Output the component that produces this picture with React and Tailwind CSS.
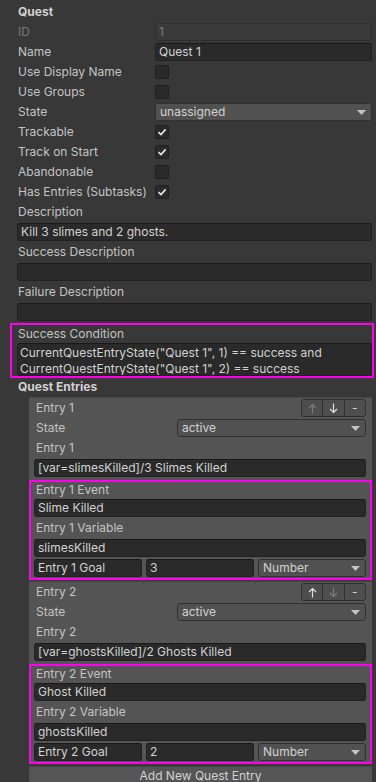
import React from "react";

const font = { fontFamily: "Inter, 'Noto Sans', sans-serif" };

function Check({ on }) {
  return (
    <div className="w-[14px] h-[14px] rounded-[2px] bg-[#2a2a2a] border border-[#1f1f1f] flex items-center justify-center">
      {on && (
        <svg width="10" height="10" viewBox="0 0 10 10">
          <polyline points="1.5,5.2 4,7.6 8.6,2.4" fill="none" stroke="#e6e6e6" strokeWidth="1.6" />
        </svg>
      )}
    </div>
  );
}

function Arrow() {
  return (
    <svg width="9" height="5" viewBox="0 0 9 5" className="shrink-0">
      <polygon points="0,0 9,0 4.5,5" fill="#c4c4c4" />
    </svg>
  );
}

function Field({ children, className = "" }) {
  return (
    <div className={"h-[18px] flex items-center rounded-[3px] bg-[#2a2a2a] border border-[#212121] border-t-[#191919] pl-[3px] text-[#d2d2d2] whitespace-nowrap overflow-hidden " + className}>
      {children}
    </div>
  );
}

function Dropdown({ children, className = "" }) {
  return (
    <div className={"h-[18px] flex items-center justify-between rounded-[3px] bg-[#515151] border border-[#303030] pl-[4px] pr-[5px] text-[#d2d2d2] " + className}>
      <span>{children}</span>
      <Arrow />
    </div>
  );
}

function Row({ label, children, dim }) {
  return (
    <div className="flex h-[20px] items-center pl-[18px] pr-[4px]">
      <div className={"w-[137px] shrink-0 " + (dim ? "text-[#7a7a7a]" : "")}>{label}</div>
      {children}
    </div>
  );
}

function Label({ children }) {
  return <div className="flex h-[20px] items-center pl-[18px]">{children}</div>;
}

function Wide({ children }) {
  return (
    <div className="flex h-[20px] items-center pl-[17px] pr-[4px]">
      <Field className="flex-1">{children}</Field>
    </div>
  );
}

function MoveButtons({ upOff, downOff }) {
  return (
    <div className="flex h-[18px] w-[65px] rounded-[3px] border border-[#303030] bg-[#4e4e4e] overflow-hidden">
      <div className={"flex-1 flex items-center justify-center border-r border-[#303030] " + (upOff ? "text-[#7c7c7c]" : "text-[#e0e0e0]")}>
        <svg width="9" height="11" viewBox="0 0 9 11">
          <path d="M4.5 10.5V1.5M1 5l3.5-3.5L8 5" fill="none" stroke="currentColor" strokeWidth="1.2" />
        </svg>
      </div>
      <div className={"flex-1 flex items-center justify-center border-r border-[#303030] " + (downOff ? "text-[#7c7c7c]" : "text-[#e0e0e0]")}>
        <svg width="9" height="11" viewBox="0 0 9 11">
          <path d="M4.5 0.5v9M1 6l3.5 3.5L8 6" fill="none" stroke="currentColor" strokeWidth="1.2" />
        </svg>
      </div>
      <div className="flex-1 flex items-center justify-center text-[#d2d2d2]">-</div>
    </div>
  );
}

function Entry({ n, text, event, variable, goal, upOff, downOff }) {
  return (
    <div className="bg-[#545454] border-t border-[#464646]">
      <div className="flex h-[20px] items-center pl-[7px] pr-[6px]">
        <span>Entry {n}</span>
        <div className="ml-auto">
          <MoveButtons upOff={upOff} downOff={downOff} />
        </div>
      </div>
      <div className="flex h-[20px] items-center pl-[7px] pr-[6px]">
        <div className="w-[141px] shrink-0">State</div>
        <Dropdown className="flex-1">active</Dropdown>
      </div>
      <div className="flex h-[20px] items-center pl-[7px]">Entry {n}</div>
      <div className="flex h-[20px] items-center pl-[5px] pr-[6px]">
        <Field className="flex-1">{text}</Field>
      </div>
      <div className="mt-[2px] border-2 border-[#ff00ee]">
        <div className="flex h-[16px] items-center pl-[5px]">Entry {n} Event</div>
        <div className="flex h-[20px] items-center pl-[3px] pr-[4px]">
          <Field className="flex-1">{event}</Field>
        </div>
        <div className="flex h-[20px] items-center pl-[5px]">Entry {n} Variable</div>
        <div className="flex h-[20px] items-center pl-[3px] pr-[4px]">
          <Field className="flex-1">{variable}</Field>
        </div>
        <div className="grid h-[20px] grid-cols-3 items-center gap-[4px] pl-[3px] pr-[4px]">
          <Field>Entry {n} Goal</Field>
          <Field>{goal}</Field>
          <Dropdown>Number</Dropdown>
        </div>
      </div>
    </div>
  );
}

export default function App() {
  return (
    <div style={font} className="w-[376px] h-[782px] overflow-hidden bg-[#383838] text-[12px] text-[#c4c4c4] pt-[2px]">
      <div className="flex h-[20px] items-center pl-[18px] font-bold text-[#d2d2d2]">Quest</div>
      <Row label="ID" dim>
        <div className="flex-1 h-[18px] flex items-center rounded-[3px] bg-[#3a3a3a] border border-[#2e2e2e] pl-[3px] text-[#7a7a7a]">1</div>
      </Row>
      <Row label="Name">
        <Field className="flex-1">Quest 1</Field>
      </Row>
      <Row label="Use Display Name"><Check /></Row>
      <Row label="Use Groups"><Check /></Row>
      <Row label="State">
        <Dropdown className="flex-1">unassigned</Dropdown>
      </Row>
      <Row label="Trackable"><Check on /></Row>
      <Row label="Track on Start"><Check on /></Row>
      <Row label="Abandonable"><Check /></Row>
      <Row label="Has Entries (Subtasks)"><Check on /></Row>
      <Label>Description</Label>
      <Wide>Kill 3 slimes and 2 ghosts.</Wide>
      <Label>Success Description</Label>
      <Wide></Wide>
      <Label>Failure Description</Label>
      <Wide></Wide>

      <div className="mt-[1px] ml-[10px] mr-[2px] border-2 border-[#ff00ee]">
        <div className="flex h-[18px] items-center pl-[6px]">Success Condition</div>
        <div className="ml-[5px] h-[33px] rounded-[3px] bg-[#2a2a2a] border border-[#212121] border-t-[#191919] pl-[2px] pt-[1px] leading-[16px] text-[#d2d2d2] whitespace-nowrap overflow-hidden">
          <div>CurrentQuestEntryState("Quest 1", 1) == success and</div>
          <div>CurrentQuestEntryState("Quest 1", 2) == success</div>
        </div>
      </div>

      <div className="flex h-[18px] items-center pl-[18px] font-bold text-[#d2d2d2]">Quest Entries</div>

      <div className="ml-[29px] mr-[4px] mt-[1px] flex flex-col gap-[1px]">
        <Entry n={1} text="[var=slimesKilled]/3 Slimes Killed" event="Slime Killed" variable="slimesKilled" goal="3" upOff />
        <Entry n={2} text="[var=ghostsKilled]/2 Ghosts Killed" event="Ghost Killed" variable="ghostsKilled" goal="2" downOff />
        <div className="mt-[1px] h-[18px] flex items-center justify-center bg-[#555555] border-t border-[#464646] text-[#d2d2d2]">
          Add New Quest Entry
        </div>
      </div>
    </div>
  );
}
